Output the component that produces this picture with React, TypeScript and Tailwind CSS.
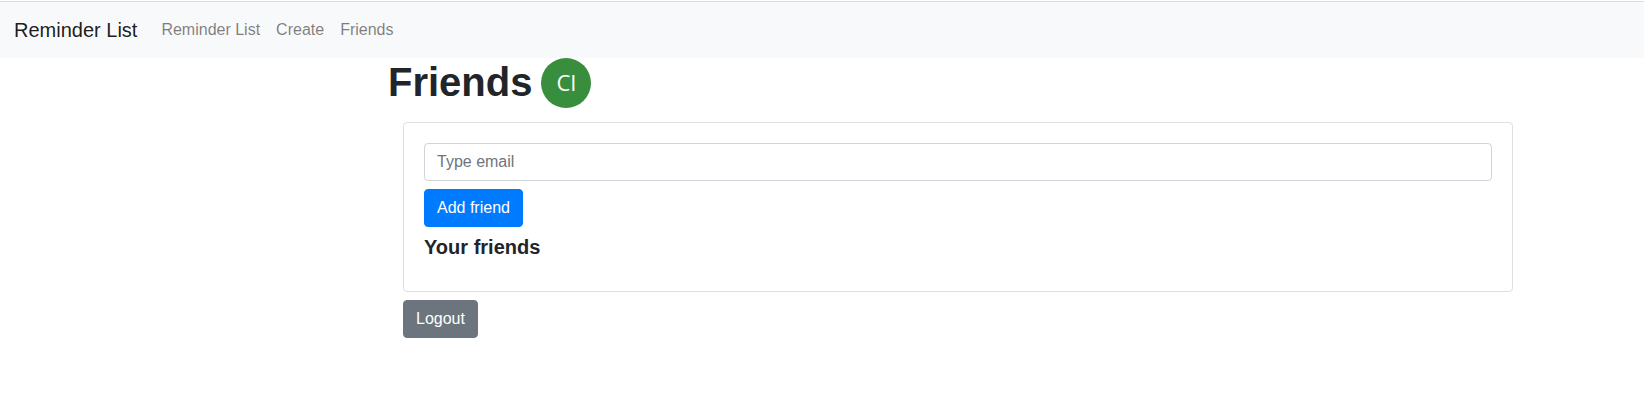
import React from "react";

const navLinks = ["Reminder List", "Create", "Friends"];

function Navbar() {
  return (
    <nav className="flex h-14 items-center bg-[#f8f9fa] px-3.5">
      <a href="#home" className="mr-4 text-xl leading-[30px] text-black/90">
        Reminder List
      </a>
      <ul className="flex">
        {navLinks.map((label) => (
          <li key={label}>
            <a href="#nav" className="block p-2 text-base leading-6 text-black/50">
              {label}
            </a>
          </li>
        ))}
      </ul>
    </nav>
  );
}

function Avatar({ initials }: { initials: string }) {
  return (
    <span className="flex size-[50px] items-center justify-center rounded-full bg-[#388e3c] pb-0.5 font-['Open_Sans',sans-serif] text-[22px] leading-none text-white">
      {initials}
    </span>
  );
}

const buttonClass =
  "block rounded border px-3 py-1.5 text-base leading-6 text-white";

export default function App() {
  return (
    <div className="bg-white pt-px font-['Liberation_Sans',Arial,sans-serif] text-[#212529]">
      <header className="border-t border-[#dadce0]">
        <Navbar />
      </header>
      <main className="pr-[116px] pl-[388px]">
        <div className="flex items-start gap-[9px]">
          <h1 className="text-[40px] leading-[48px] font-bold">Friends</h1>
          <Avatar initials="CI" />
        </div>
        <div className="px-[15px] pt-3.5">
          <section className="mb-2 rounded border border-[#dfdfdf] px-5 pt-5 pb-8">
            <form onSubmit={(e) => e.preventDefault()}>
              <input
                type="email"
                aria-label="Email"
                placeholder="Type email"
                className="mb-2 block w-full rounded border border-[#ced4da] bg-white px-3 py-1.5 text-base leading-6 text-[#495057] placeholder:text-[#6c757d]"
              />
              <button type="submit" className={`${buttonClass} border-[#007bff] bg-[#007bff]`}>
                Add friend
              </button>
            </form>
            <h2 className="mt-2 text-xl leading-6 font-bold">Your friends</h2>
          </section>
          <button type="button" className={`${buttonClass} border-[#6c757d] bg-[#6c757d]`}>
            Logout
          </button>
        </div>
      </main>
    </div>
  );
}
